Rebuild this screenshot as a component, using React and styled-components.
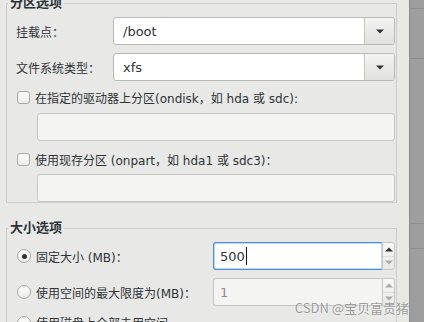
import React from 'react'
import styled, { createGlobalStyle } from 'styled-components'

const GlobalStyle = createGlobalStyle`
  html, body { margin: 0; padding: 0; }
  body {
    font-family: "DejaVu Sans", "Noto Sans CJK SC", sans-serif;
    font-size: 12px;
    color: #2e3436;
    background: #e8e8e7;
  }
`

const Screen = styled.div`
  position: relative;
  width: 424px;
  height: 322px;
  overflow: hidden;
  display: flex;
  background: #e8e8e7;
`

const Dialog = styled.div`
  width: 409px;
  flex: none;
  box-sizing: border-box;
  padding: 0 12px 0 6px;
`

const Group = styled.fieldset`
  margin: ${(p) => (p.$first ? '-4px' : '18px')} 0 0 0;
  padding: 7px 1px 0 9px;
  border: 1px solid #cdcdcb;
  min-width: 0;
  display: flex;
  flex-direction: column;
`

const Legend = styled.legend`
  padding: 0 2px;
  margin-left: -8px;
  font-size: 13px;
  line-height: 14px;
  font-weight: bold;
  color: #2e3436;
`

const FieldRow = styled.div`
  display: flex;
  align-items: center;
  margin-top: ${(p) => p.$gap || 0}px;
`

const Label = styled.span`
  width: ${(p) => p.$width || 97}px;
  flex: none;
  display: flex;
  align-items: center;
  white-space: nowrap;
`

const Combo = styled.div`
  flex: 1;
  height: 28px;
  display: flex;
  box-sizing: border-box;
  border: 1px solid #b8b8b5;
  border-radius: 3px;
  background: #fff;
  overflow: hidden;
`

const ComboText = styled.div`
  flex: 1;
  display: flex;
  align-items: center;
  padding-left: 9px;
  font-size: 13px;
`

const ComboButton = styled.div`
  width: 29px;
  flex: none;
  display: flex;
  align-items: center;
  justify-content: center;
  border-left: 1px solid #c4c4c1;
  background: linear-gradient(#f4f4f3, #e0e0de);
`

const CheckRow = styled.label`
  display: flex;
  align-items: center;
  height: 18px;
  margin-top: ${(p) => p.$gap}px;
  padding-left: 1px;
  gap: 5px;
  white-space: nowrap;
`

const Check = styled.span`
  width: 13px;
  height: 13px;
  flex: none;
  box-sizing: border-box;
  border: 1px solid #a8a8a5;
  border-radius: 3px;
  background: linear-gradient(#fdfdfd, #ececeb);
`

const Entry = styled.div`
  height: 28px;
  margin: ${(p) => p.$gap}px 0 0 21px;
  box-sizing: border-box;
  border: 1px solid #c6c6c3;
  border-radius: 3px;
  background: #f4f4f2;
`

const Radio = styled.span`
  width: 14px;
  height: 14px;
  flex: none;
  margin: 0 5px 0 1px;
  box-sizing: border-box;
  border: 1px solid #a8a8a5;
  border-radius: 50%;
  background: linear-gradient(#fdfdfd, #ececeb);
  display: flex;
  align-items: center;
  justify-content: center;
  &::after {
    content: '';
    width: 5px;
    height: 5px;
    border-radius: 50%;
    background: ${(p) => (p.$checked ? '#2e3436' : 'transparent')};
  }
`

const Spin = styled.div`
  flex: 1;
  height: 28px;
  display: flex;
`

const SpinText = styled.div`
  flex: 1;
  display: flex;
  align-items: center;
  padding-left: 6px;
  box-sizing: border-box;
  font-size: 13px;
  border: 1px solid ${(p) => (p.$focused ? '#4a90d9' : '#c6c6c3')};
  border-right: none;
  border-radius: 3px 0 0 3px;
  background: ${(p) => (p.$focused ? '#fff' : '#f4f4f2')};
  color: ${(p) => (p.$focused ? '#2e3436' : '#8b8e8f')};
  box-shadow: ${(p) => (p.$focused ? 'inset 0 0 0 1px rgba(74,144,217,0.35)' : 'none')};
`

const Caret = styled.span`
  width: 1px;
  height: 18px;
  margin-left: 1px;
  background: #1a1a1a;
`

const SpinButtons = styled.div`
  width: 13px;
  flex: none;
  display: flex;
  flex-direction: column;
  box-sizing: border-box;
  border: 1px solid #c6c6c3;
  border-radius: 0 3px 3px 0;
  background: linear-gradient(#f6f6f5, #e9e9e8);
`

const SpinButton = styled.div`
  flex: 1;
  display: flex;
  align-items: center;
  justify-content: center;
  & + & { border-top: 1px solid #dededc; }
`

const SideStrip = styled.div`
  flex: 1;
  background: #9e9e9e;
  border-left: 1px solid #8c8c8c;
  display: flex;
  flex-direction: column;
`

const StripCell = styled.div`
  height: ${(p) => p.$h}px;
  flex: none;
  border-bottom: 1px solid #8e8e8e;
`

const Watermark = styled.div`
  position: absolute;
  right: 15px;
  bottom: 5px;
  font-family: "Noto Sans CJK SC", sans-serif;
  font-size: 13px;
  color: rgba(95, 95, 95, 0.6);
  text-shadow: 0 0 2px rgba(255, 255, 255, 0.8);
  white-space: nowrap;
`

const Triangle = ({ up, color = '#2e3436' }) => (
  <svg width="8" height="5" viewBox="0 0 8 5">
    <path d={up ? 'M0 4.5 L4 0.5 L8 4.5 Z' : 'M0 0.5 L8 0.5 L4 4.5 Z'} fill={color} />
  </svg>
)

const ComboBox = ({ value }) => (
  <Combo>
    <ComboText>{value}</ComboText>
    <ComboButton>
      <Triangle />
    </ComboButton>
  </Combo>
)

const SpinBox = ({ value, focused }) => (
  <Spin>
    <SpinText $focused={focused}>
      {value}
      {focused && <Caret />}
    </SpinText>
    <SpinButtons>
      <SpinButton>
        <Triangle up color={focused ? '#2e3436' : '#a9abab'} />
      </SpinButton>
      <SpinButton>
        <Triangle color="#a9abab" />
      </SpinButton>
    </SpinButtons>
  </Spin>
)

const App = () => {
  return (
    <Screen>
      <GlobalStyle />
      <Dialog>
        <Group $first>
          <Legend>分区选项</Legend>
          <FieldRow>
            <Label>挂载点：</Label>
            <ComboBox value="/boot" />
          </FieldRow>
          <FieldRow $gap={8}>
            <Label>文件系统类型：</Label>
            <ComboBox value="xfs" />
          </FieldRow>
          <CheckRow $gap={7}>
            <Check />
            <span>在指定的驱动器上分区(ondisk，如 hda 或 sdc):</span>
          </CheckRow>
          <Entry $gap={7} />
          <CheckRow $gap={9}>
            <Check />
            <span>使用现存分区 (onpart，如 hda1 或 sdc3)：</span>
          </CheckRow>
          <Entry $gap={6} />
        </Group>

        <Group>
          <Legend>大小选项</Legend>
          <FieldRow>
            <Label $width={197}>
              <Radio $checked />
              固定大小 (MB)：
            </Label>
            <SpinBox value="500" focused />
          </FieldRow>
          <FieldRow $gap={8}>
            <Label $width={197}>
              <Radio />
              使用空间的最大限度为(MB)：
            </Label>
            <SpinBox value="1" />
          </FieldRow>
          <FieldRow $gap={8}>
            <Label $width={197}>
              <Radio />
              使用磁盘上全部未用空间
            </Label>
          </FieldRow>
        </Group>
      </Dialog>
      <SideStrip>
        <StripCell $h={8} />
        <StripCell $h={49} />
        <StripCell $h={164} />
        <StripCell $h={24} />
      </SideStrip>
      <Watermark>CSDN @宝贝富贵猪</Watermark>
    </Screen>
  )
}

export default App
